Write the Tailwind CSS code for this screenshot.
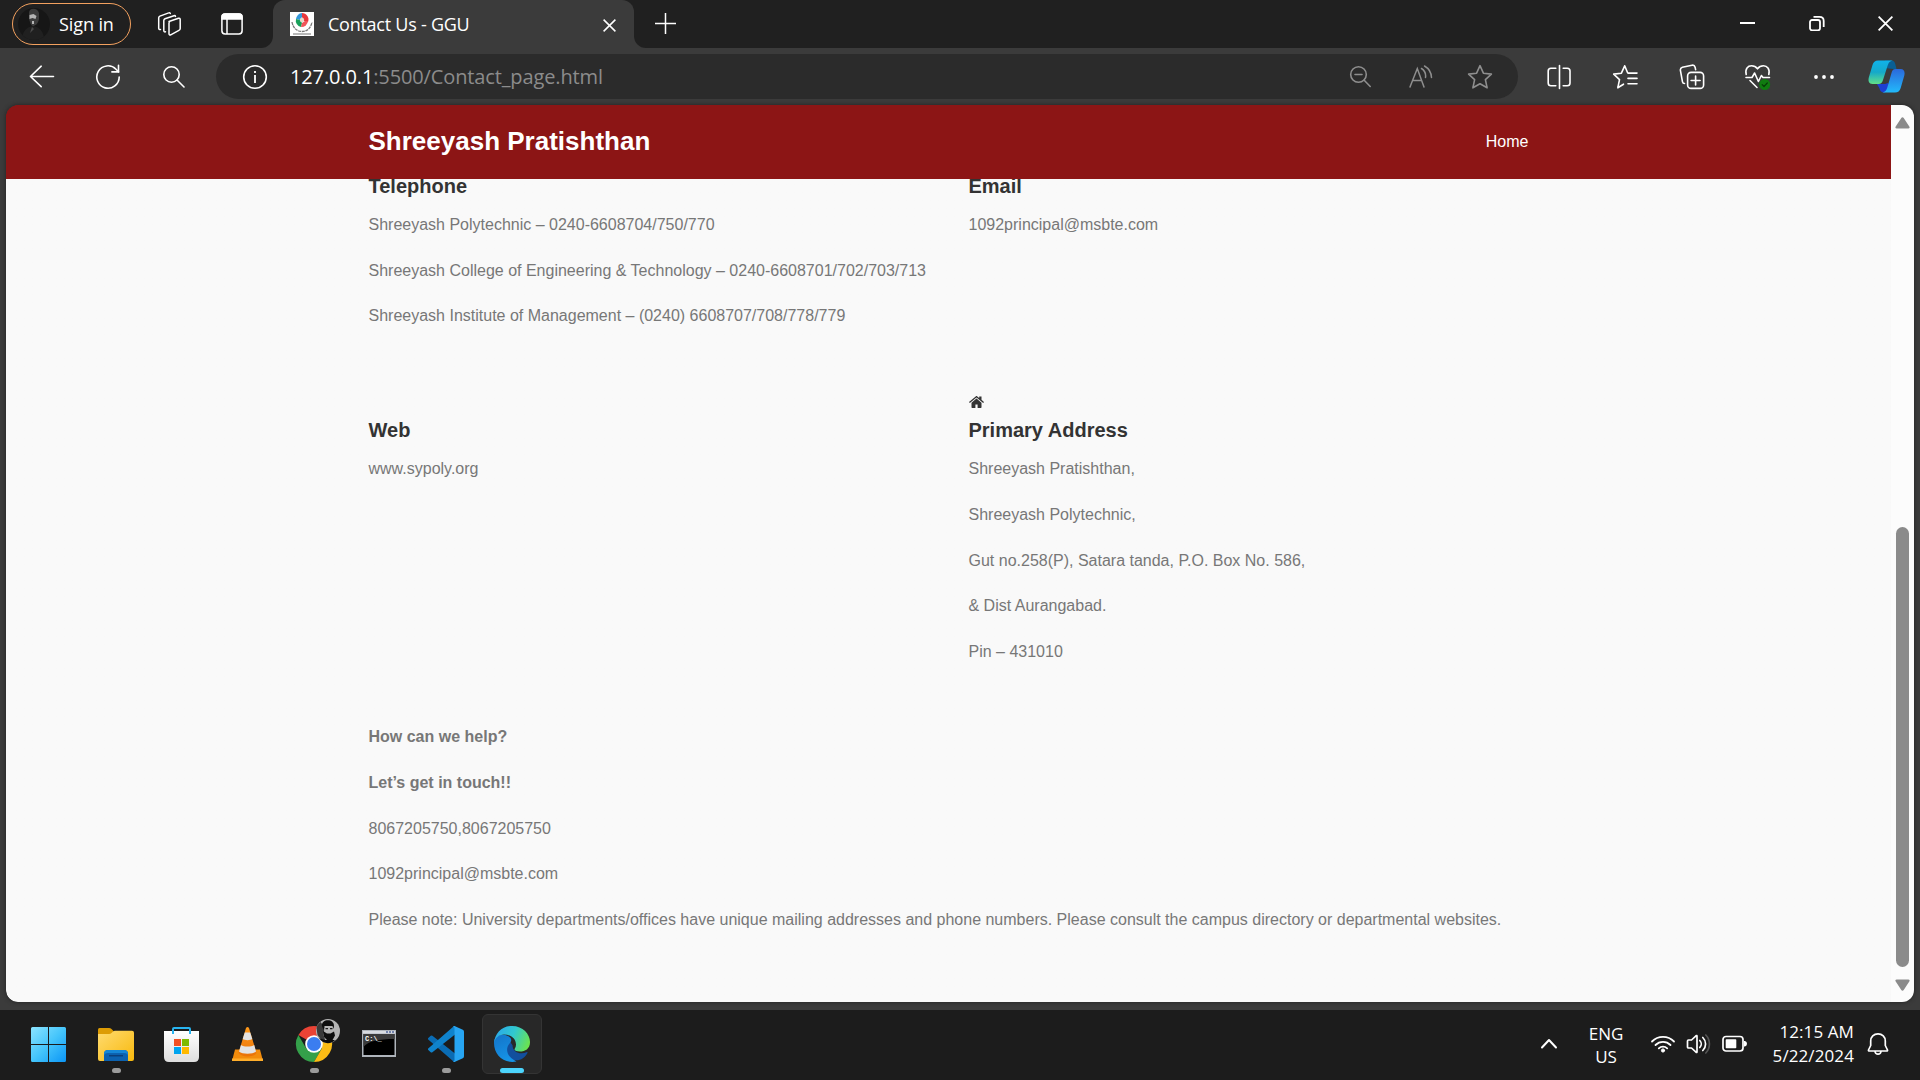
<!DOCTYPE html>
<html lang="en">
<head>
<meta charset="utf-8">
<title>Contact Us - GGU</title>
<script src="https://cdn.jsdelivr.net/npm/@tailwindcss/browser@4"></script>
</head>
<body class="w-[1920px] h-[1080px] overflow-hidden flex flex-col bg-[#3b3b3b] font-['Open_Sans','Noto_Sans',sans-serif] text-white">

<!-- Tab strip -->
<div class="h-12 shrink-0 flex items-start bg-[#3b3b3b]">
  <div class="w-[273px] h-12 shrink-0 flex items-start bg-[#202020] rounded-br-[12px]">
    <div class="ml-3 mt-[3px] w-[119px] h-[42px] rounded-full border-[1.5px] border-[#f3a15f] flex items-center pl-[5px] gap-[9px]">
      <svg class="size-8 shrink-0" viewBox="0 0 32 32"><defs><clipPath id="me"><circle cx="16" cy="16" r="16"/></clipPath></defs><g clip-path="url(#me)"><path fill="#161616" d="M0 0h32v32H0z"/><path fill="#202020" d="M4 32c0-9 5-13 11-14 6 1 11 5 11 14z"/><path fill="#3c3c3c" d="M11 5c0-6 9-5 10 0v6c-1 5-4 7-6 7s-3-4-4-7z"/><path fill="#b5b5b5" d="M11.500 7l4-1 3 2-1 3-3-1-3 1zM14 13h2v3h-2z"/><path fill="#4b4b4b" d="M14 19l-2 6 4-4z"/></g></svg>
      <span class="text-[18px] leading-6 tracking-[-0.1px] whitespace-nowrap mb-px">Sign in</span>
    </div>
    <svg class="ml-[25px] mt-[11px] w-[26px] h-[26px]" viewBox="0 0 26 26" fill="none" stroke="#fff" stroke-width="1.500" stroke-linejoin="round" stroke-linecap="round"><path d="M13 10.500l9.500-3.200c1-.3 1.700.2 1.700 1.200v9c0 .9-.5 1.600-1.300 1.900l-8.200 4.400c-.9.400-1.700 0-1.700-1V12c0-.8.1-1.200.8-1.500z"/><path d="M9.500 20.800c-1 .3-1.700-.2-1.700-1.200V9.500c0-.8.5-1.400 1.200-1.700l9-3.100c.7-.2 1.300 0 1.500.7"/><path d="M4.500 18.500c-1 .3-1.800-.2-1.800-1.200V6.800c0-.8.5-1.400 1.200-1.700l8.800-3.200c.7-.3 1.300 0 1.600.6"/></svg>
    <svg class="ml-[39px] mt-[13px] w-[22px] h-[22px]" viewBox="0 0 22 22" fill="none" stroke="#fff" stroke-width="1.500"><rect x=".9" y="1" width="20.200" height="20" rx="3.200"/><path fill="#fff" d="M1 6V4c0-2 1.200-3 3-3h14c1.800 0 3 1 3 3v2z"/><path d="M6 6v15"/></svg>
  </div>
  <div class="w-[361px] h-12 shrink-0 bg-[#202020]">
    <div class="h-full flex items-center rounded-t-[12px] bg-[#3b3b3b] pl-[17px]">
      <svg class="size-6" viewBox="0 0 24 24"><path fill="#fff" d="M0 0h24v24H0z"/><path fill="#3498db" d="M12 1a6.500 6.500 0 0 0-6 6l4 1 2-3z"/><path fill="#e8383d" d="M12 1a6.500 6.500 0 0 1 6 9l-4-1-2-4z"/><path fill="#18a05a" d="M6 7a6.500 6.500 0 0 0 5 8l1-4-2-3z"/><path fill="#f0565a" d="M18 9a6.500 6.500 0 0 1-7 6l1-4 3-2z"/><circle cx="12" cy="8" r="2.200" fill="#e9d9c9"/><path d="M2 10c1 6 5 9.500 10 9.500S21 16 22 10" fill="none" stroke="#777" stroke-width="1.300" stroke-dasharray="3 .7"/><path d="M3 22h18" stroke="#888" stroke-width="1.200"/></svg>
      <span class="ml-[14px] w-[275px] text-[18px] leading-6 tracking-[-0.25px] whitespace-nowrap mb-px">Contact Us - GGU</span>
      <svg class="mt-[2px] size-[13px]" viewBox="0 0 13 13" stroke="#fff" stroke-width="1.500"><path d="M.6.6l11.800 11.800M12.400.6L.6 12.400"/></svg>
    </div>
  </div>
  <div class="flex-1 h-12 flex items-start bg-[#202020] rounded-bl-[12px]">
    <svg class="ml-[21px] mt-[13px] size-[21px]" viewBox="0 0 21 21" stroke="#fff" stroke-width="1.500"><path d="M10.500 0v21M0 10.500h21"/></svg>
    <svg class="ml-auto mt-[15px] size-4" viewBox="0 0 16 16" stroke="#fff" stroke-width="2"><path d="M0 8h15"/></svg>
    <svg class="ml-[53px] mt-[15px] size-4" viewBox="0 0 16 16" fill="none" stroke="#fff" stroke-width="1.800"><rect x="1" y="5" width="10" height="10.300" rx="2"/><path d="M4.500 1.800h6c2.500 0 4.200 1.700 4.200 4.200v6"/></svg>
    <svg class="ml-[53px] mr-[27px] mt-[16px] size-[15px]" viewBox="0 0 15 15" stroke="#fff" stroke-width="1.800"><path d="M.6.6l13.800 13.800M14.400.6L.6 14.400"/></svg>
  </div>
</div>

<!-- Toolbar -->
<div class="h-[57px] shrink-0 flex items-center pl-[29px]">
  <svg class="size-[26px]" viewBox="0 0 26 26" fill="none" stroke="#fff" stroke-width="1.600" stroke-linecap="round" stroke-linejoin="round"><path d="M1.500 12.500h23M12.200 2.200L1.500 12.500l10.700 10.200"/></svg>
  <svg class="ml-10 size-[26px]" viewBox="0 0 26 26" fill="none" stroke="#fff" stroke-width="1.600" stroke-linecap="round"><path d="M24.200 13A11.200 11.200 0 1 1 21 5.200l2.500 2.600"/><path d="M23.500 1.300v6.600h-6.600"/></svg>
  <svg class="ml-[41px] size-[24px]" viewBox="0 0 24 24" fill="none" stroke="#fff" stroke-width="1.600" stroke-linecap="round"><circle cx="9.500" cy="9.500" r="7.700"/><path d="M15 15l7 7"/></svg>
  <div class="ml-[30px] w-[1302px] h-[45px] rounded-full bg-[#2b2b2b] flex items-center pl-[26px]">
    <svg class="size-[26px]" viewBox="0 0 26 26" fill="none" stroke="#fff" stroke-width="1.600"><circle cx="13" cy="13" r="11.300"/><path d="M13 11v8M13 7v2" stroke-width="1.800"/></svg>
    <span class="ml-[22px] text-[20px] leading-7 tracking-[-0.13px] whitespace-nowrap text-[#8c8c8c]"><span class="text-white">127.0.0.1</span>:5500/Contact_page.html</span>
    <svg class="ml-auto size-6" viewBox="0 0 24 24" fill="none" stroke="#8e8e8e" stroke-width="1.600" stroke-linecap="round"><circle cx="9.500" cy="9.500" r="7.800"/><path d="M15.200 15.200l6 6.300M6 9.500h7"/></svg>
    <svg class="ml-[36px] size-6" viewBox="0 0 24 24" fill="none" stroke="#8e8e8e" stroke-width="1.500" stroke-linecap="round"><path d="M1 22L8.300 3.500 15 22M3.500 15.500h9M12.500 3.500a9 9 0 0 1 4 9M15.500 1a14 14 0 0 1 7 11.500"/></svg>
    <svg class="ml-[34px] mr-[25px] size-[26px]" viewBox="0 0 26 26" fill="none" stroke="#8e8e8e" stroke-width="1.600" stroke-linejoin="round"><path d="M13 1.700l3.400 7.500 8 .9-6 5.500 1.700 8.200L13 19.800l-7.100 4 1.700-8.200-6-5.500 8-.9z"/></svg>
  </div>
  <svg class="ml-[28px] size-[26px]" viewBox="0 0 26 26" fill="none" stroke="#fff" stroke-width="1.600" stroke-linecap="round"><path d="M13.500 1.500v23M9.800 4.200H5a2.800 2.800 0 0 0-2.800 2.800v12A2.800 2.800 0 0 0 5 21.800h4.800M17.200 4.200h4a2.800 2.800 0 0 1 2.800 2.800v12a2.800 2.800 0 0 1-2.800 2.800h-4"/></svg>
  <svg class="ml-[40px] size-[26px]" viewBox="0 0 26 26" fill="none" stroke="#fff" stroke-width="1.600" stroke-linecap="round" stroke-linejoin="round"><path d="M16 9h-.3L12.700 1.800 9.400 9.200l-7.700.9 5.800 5.500-1.700 8.200 5.700-3.600M16 9.100h9M16 14.400h9M16 19.700h9"/></svg>
  <svg class="ml-[41px] size-[26px]" viewBox="0 0 26 26" fill="none" stroke="#fff" stroke-width="1.600" stroke-linecap="round" stroke-linejoin="round"><path d="M5.500 19.500c-1 0-1.800-.6-2-1.700L1.400 6.300c-.2-1.500.5-2.600 2-3L13 1.200c1.500-.3 2.700.5 3.100 2l.5 2.500"/><rect x="8.600" y="8.400" width="16" height="16" rx="3.500"/><path d="M16.600 12v9M12.100 16.500h9"/></svg>
  <svg class="ml-[39px] size-[27px]" viewBox="0 0 27 27" fill="none" stroke="#fff" stroke-width="1.600" stroke-linecap="round" stroke-linejoin="round"><path d="M2.200 11.500C.8 5.500 4 2.800 7.500 2.800c2.500 0 4.500 1 6 3 1.500-2 3.500-3 6-3 3.500 0 6.700 3.200 5.300 8.700M6 17.500l7 7"/><path d="M2 14.500h6l2.600-4.500 3.800 8.500 3-6 1.600 2h6.500"/><circle cx="20.700" cy="21.500" r="5.500" fill="#107c10" stroke="none"/><path d="M18.200 21.700l1.800 1.800 3.300-3.500" stroke="#073d07" stroke-width="1.200"/></svg>
  <svg class="ml-[40px] w-6 h-[26px]" viewBox="0 0 24 26" fill="#fff"><circle cx="5" cy="13" r="1.900"/><circle cx="13" cy="13" r="1.900"/><circle cx="21" cy="13" r="1.900"/></svg>
  <svg class="ml-[33px] w-[37px] h-[33px]" viewBox="0 0 37 33"><defs><linearGradient id="ca" x1="0" y1="0" x2="0" y2="1"><stop offset="0" stop-color="#0fb2ea"/><stop offset=".5" stop-color="#16a9c9"/><stop offset="1" stop-color="#62e088"/></linearGradient><linearGradient id="cb" x1="0" y1="0" x2="0" y2="1"><stop offset="0" stop-color="#2b68dc"/><stop offset="1" stop-color="#22bafb"/></linearGradient></defs><path fill="#0a5f94" d="M17 .5h6c2.500 0 3.500 1 4.200 3.200L28.500 9h-3c-3.500 0-5.500-1-8.500-1z"/><path fill="#1d3fd2" d="M9 24h8l3-1 1 5-4 4.500c-3.500 0-4.700-1.200-5.500-4z"/><path fill="url(#ca)" d="M10 .5H25c-3.500.5-4.500 2.500-5.500 5.500L15 20c-.8 2.700-2 4-4.500 4H4.500C.8 24 0 21 .8 17.500L4.500 5C5.500 2 7 .5 10 .5z"/><path fill="url(#cb)" d="M27.500 9h5c3.800 0 4.600 3 3.800 6.500L32.700 28c-1 3-2.700 4.500-5.700 4.500H14.500c3-.5 4-2.500 4.800-5L23.500 13c.8-2.700 1.500-4 4-4z"/></svg>
</div>

<!-- Page viewport -->
<div class="ml-1.5 w-[1908px] h-[897px] shrink-0 rounded-[12px] overflow-hidden flex shadow-[0_0_4px_#222] font-['Liberation_Sans',Arial,sans-serif]">
  <div class="w-[1885px] h-full overflow-hidden rounded-l-[12px] bg-linear-to-b from-[#8c1515] from-5% to-[#f9f9f9] to-5% text-[16px] leading-[25.6px] text-[#777]">
    <header class="relative z-10 h-[74px] bg-[#8c1515] text-white">
      <div class="mx-auto w-[1200px] h-full px-5 flex items-center justify-between">
        <h1 class="text-[26px] font-bold">Shreeyash Pratishthan</h1>
        <a>Home</a>
      </div>
    </header>
    <main class="mx-auto w-[1200px] px-5 mt-[-34.600px]">
      <div class="grid grid-cols-[600px_560px]">
        <section class="pb-10">
          <div class="h-[25.600px]"></div>
          <h2 class="text-[20px] leading-8 font-bold text-[#333] mb-2.5">Telephone</h2>
          <p class="mb-5">Shreeyash Polytechnic – 0240-6608704/750/770</p>
          <p class="mb-5">Shreeyash College of Engineering &amp; Technology – 0240-6608701/702/703/713</p>
          <p class="mb-5">Shreeyash Institute of Management – (0240) 6608707/708/778/779</p>
        </section>
        <section class="pb-10">
          <div class="h-[25.600px]"></div>
          <h2 class="text-[20px] leading-8 font-bold text-[#333] mb-2.5">Email</h2>
          <p>1092principal@msbte.com</p>
        </section>
        <section class="pb-10">
          <div class="h-[25.600px]"></div>
          <h2 class="text-[20px] leading-8 font-bold text-[#333] mb-2.5">Web</h2>
          <p>www.sypoly.org</p>
        </section>
        <section class="pb-10">
          <div class="h-[25.600px] flex items-center">
            <svg class="w-[15px] h-3" viewBox="0 0 15 12" fill="#333"><path d="M7.500 2.500l5 4.200v4.500c0 .4-.3.700-.6.700H8.600V8.500H6.400v3.400H3.100c-.3 0-.6-.3-.6-.7V6.700z"/><path d="M0 6L6.700.4c.5-.4 1.100-.4 1.600 0l1.900 1.600V.4h2.300v3.400L15 6l-.8 1-6.700-5.400L.8 7z"/></svg>
          </div>
          <h2 class="text-[20px] leading-8 font-bold text-[#333] mb-2.5">Primary Address</h2>
          <p class="mb-5">Shreeyash Pratishthan,</p>
          <p class="mb-5">Shreeyash Polytechnic,</p>
          <p class="mb-5">Gut no.258(P), Satara tanda, P.O. Box No. 586,</p>
          <p class="mb-5">&amp; Dist Aurangabad.</p>
          <p class="mb-5">Pin – 431010</p>
        </section>
      </div>
      <section>
        <p class="mb-5 font-bold">How can we help?</p>
        <p class="mb-5 font-bold">Let’s get in touch!!</p>
        <p class="mb-5">8067205750,8067205750</p>
        <p class="mb-5">1092principal@msbte.com</p>
        <p class="whitespace-nowrap">Please note: University departments/offices have unique mailing addresses and phone numbers. Please consult the campus directory or departmental websites.</p>
      </section>
    </main>
  </div>
  <div class="w-[23px] h-full flex flex-col items-center pt-3 pb-[11px] bg-[#fcfcfc]">
    <svg class="w-[15px] h-3" viewBox="0 0 15 12"><path fill="#8b8b8b" d="M6.300 1c.6-1 1.800-1 2.400 0l5.600 8.500c.7 1.200.2 2-1 2H1.700c-1.200 0-1.700-.8-1-2z"/></svg>
    <div class="mt-auto w-[13px] h-[440px] rounded-full bg-[#8b8b8b]"></div>
    <svg class="mt-3 w-[15px] h-3" viewBox="0 0 15 12"><path fill="#8b8b8b" d="M6.300 11c.6 1 1.800 1 2.400 0l5.600-8.500c.7-1.200.2-2-1-2H1.700c-1.200 0-1.700.8-1 2z"/></svg>
  </div>
</div>

<!-- Taskbar -->
<div class="mt-2 h-[70px] shrink-0 bg-[#1c1c1c] flex items-start">
  <div class="ml-[18px] flex pt-1">
    <div class="w-[60px] h-[60px] pt-[13px] flex justify-center">
      <svg class="size-[35px]" viewBox="0 0 35 35"><defs><linearGradient id="w" x1="0" y1="0" x2="1" y2="1"><stop offset="0" stop-color="#8ce4ff"/><stop offset=".5" stop-color="#45c5fb"/><stop offset="1" stop-color="#0b95f5"/></linearGradient></defs><path fill="url(#w)" d="M1.500 0H17v17H0V1.500Q0 0 1.500 0zM18 0h15.500Q35 0 35 1.500V17H18zM0 18h17v17H1.500Q0 35 0 33.500zM18 18h17v15.500q0 1.500-1.500 1.500H18z"/></svg>
    </div>
    <div class="ml-2 w-[60px] h-[60px] pt-[13px] flex flex-col items-center">
      <svg class="w-9 h-[35px] shrink-0" viewBox="0 0 36 35"><defs><linearGradient id="f" x1="0" y1="0" x2="1" y2="1"><stop offset="0" stop-color="#ffdb70"/><stop offset="1" stop-color="#f8b90d"/></linearGradient></defs><path fill="#dd9c05" d="M0 7V2.500Q0 1 1.500 1H11q1.500 0 2.500 1l2 2v4z"/><path fill="url(#f)" d="M0 7h11q1.500 0 2.500-1l1.500-1.500q.7-.7 2-.7h17q2 0 2 2V32q0 2-2 2H2q-2 0-2-2z"/><path fill="#0c62b0" d="M6 34V27q0-4 4-4h16q4 0 4 4v7z"/><path fill="#1587d6" d="M6 29v-2q0-4 4-4h16q4 0 4 4v2q0-3-4-3H10q-4 0-4 3z"/><path stroke="#0b3f7a" stroke-width="1.500" d="M11 28.700h14"/></svg>
      <div class="mt-1.5 w-[9px] h-[5px] shrink-0 rounded-full bg-[#9b9b9b]"></div>
    </div>
    <div class="ml-[5px] w-[60px] h-[60px] pt-[13px] flex justify-center">
      <svg class="size-[35px]" viewBox="0 0 35 35"><defs><linearGradient id="s" x1="0" y1="0" x2="0" y2="1"><stop offset="0" stop-color="#fff"/><stop offset="1" stop-color="#dedede"/></linearGradient></defs><path fill="url(#s)" d="M0 4h35v26q0 5-5 5H5q-5 0-5-5z"/><path fill="none" stroke="#28b4f0" stroke-width="2" d="M9 7V2q0-1 1-1h15q1 0 1 1v5"/><path fill="#f25022" d="M10 12h7v7h-7z"/><path fill="#7fba00" d="M18 12h7v7h-7z"/><path fill="#00a4ef" d="M10 20h7v7h-7z"/><path fill="#ffb900" d="M18 20h7v7h-7z"/></svg>
    </div>
    <div class="ml-1.5 w-[60px] h-[60px] pt-[13px] flex justify-center">
      <svg class="w-[31px] h-[35px]" viewBox="0 0 31 35"><defs><linearGradient id="v" x1="0" y1="0" x2="0" y2="1"><stop offset="0" stop-color="#ff9a1a"/><stop offset="1" stop-color="#e97208"/></linearGradient></defs><path fill="#f28c0c" d="M3 22.500h25L31 34H0z"/><path fill="#ffae2b" d="M0 31.500h31V34H0z"/><path fill="url(#v)" d="M14 1q1.500-2 3 0l7.500 25c-3 4.500-15 4.500-18 0z"/><path fill="#e3e3e3" d="M12.800 5.500h5.400L20.300 12c-2 1.500-7.500 1.500-9.600 0zM9 18c3 2 10 2 13.200 0l1.800 6.500c-3.500 3-13.500 3-17 0z"/></svg>
    </div>
    <div class="ml-[7px] w-[60px] h-[60px] pt-[3px] flex flex-col items-center">
      <svg class="w-[54px] h-[45px] shrink-0" viewBox="0 0 54 45"><g transform="translate(27,27)"><path fill="#ea4335" d="M0 0L-15.600-9A18 18 0 0 1 15.600-9H0z"/><path fill="#34a04a" d="M-15.600-9A18 18 0 0 0 0 18L7.800 4.500 0 0-7.800 4.500z"/><path fill="#fbbc15" d="M15.600-9A18 18 0 0 1 0 18L7.800 4.500 7-9z"/><path fill="#ea4335" d="M0 0V-9h8z"/><circle r="8.800" fill="#fff"/><circle r="7" fill="#3b7df0"/></g><circle cx="41" cy="14" r="12" fill="#b5b5b5"/><path fill="#3a3a3a" d="M29.500 11q1-4 4-6l4 5-1 8 2 6q-5-1-8-6z"/><path fill="#0e0e0e" d="M35 9c-1-7 12-8 12 0l-.5 3-1-3h-8l-1 4zM36 14l4 2.500h3.500l3.500-2 1 4-3 5.500h-4l-4-4zM32 21l6 2 10 0c-3 4-12 5-16-2z"/><path fill="#1a1a1a" d="M38.500 11h2.500v1.200h-2.500zM43 11h2.500v1.200H43z"/></svg>
      <div class="mt-[6px] w-[9px] h-[5px] shrink-0 rounded-full bg-[#9b9b9b]"></div>
    </div>
    <div class="ml-[5px] w-[60px] h-[60px] pt-4 flex justify-center">
      <svg class="w-[34px] h-[27px]" viewBox="0 0 34 27"><path fill="#aeb4bb" d="M0 0h34v27H0z"/><path fill="#d8dbe0" d="M1 1h32v2.500H1z"/><path fill="#51679c" d="M24 1.200h2v1.500h-2zM27 1.200h2v1.500h-2zM30 1.200h2v1.500h-2z"/><path fill="#000" d="M1.500 4h31v21h-31z"/><path fill="#3a3a3a" d="M1.500 4h31v5C17 9 6 11 1.500 17z"/><text x="3" y="11" font-family="Liberation Mono, monospace" font-weight="bold" font-size="7" fill="#fff">C:\_</text></svg>
    </div>
    <div class="ml-[7px] w-[60px] h-[60px] pt-3 flex flex-col items-center">
      <svg class="size-9 shrink-0" viewBox="0 0 36 36"><path fill="#0a6cb4" d="M0 12.200l2.700-2.400q.8-.6 1.700 0L27 27.500V36q-1 0-1.800-.8L.2 13.500q-.7-.7-.2-1.300z"/><path fill="#0f83cd" d="M0 23.800l2.700 2.400q.8.600 1.700 0L27 8.500V0q-1 0-1.800.8L.2 22.500q-.7.700-.2 1.300z"/><path fill="#27a5f2" d="M26.500 0l8.300 3.800q1.200.6 1.200 2v24.400q0 1.400-1.200 2L26.500 36q-1 .2-1.500-.8 1.500.5 1.500-1.500V2.300q0-2-1.500-1.500.5-1 1.500-.8z"/></svg>
      <div class="mt-1.5 w-[9px] h-[5px] shrink-0 rounded-full bg-[#9b9b9b]"></div>
    </div>
    <div class="ml-1.5 w-[60px] h-[60px] pt-[11px] flex flex-col items-center rounded-[6px] bg-[#282828] border border-[#343434]">
      <svg class="size-9 shrink-0" viewBox="0 0 36 36"><defs><linearGradient id="e1" x1="0" y1=".3" x2="1" y2=".6"><stop offset="0" stop-color="#2aa8ea"/><stop offset=".5" stop-color="#31c8cf"/><stop offset="1" stop-color="#6be34f"/></linearGradient><linearGradient id="e2" x1="0" y1="0" x2=".4" y2="1"><stop offset="0" stop-color="#1473c8"/><stop offset="1" stop-color="#1593e6"/></linearGradient></defs><path fill="#124f9d" d="M15 14c-7 4-7 18 4 20 7 1.500 11.500-2 14.500-7 .3-.7-.3-1.200-1-.8-6 3-14 0-14-7z"/><path fill="url(#e2)" d="M0 17C0 9 8 7 14 10c4 2 4 5 1.500 7.500-5 6-2 14 7 18C10 38 0 29 0 17z"/><path fill="url(#e1)" d="M0 17C1 7 8 0 18 0c11 0 18 8 18 16 0 7-5 9.500-10 9.500-3 0-5.500-1-5.500-2 0-1 1.500-2 1.500-5C22 12 16 8.500 10 8.500 5 8.500 1 12 0 17z"/></svg>
      <div class="mt-1.5 w-6 h-[5px] shrink-0 rounded-full bg-[#4cd4fc]"></div>
    </div>
  </div>
  <div class="ml-auto flex h-[70px]">
    <svg class="mt-[27px] w-[18px] h-[13px]" viewBox="0 0 18 13" fill="none" stroke="#fff" stroke-width="2" stroke-linecap="round" stroke-linejoin="round"><path d="M2 10.500l7-7.500 7 7.500"/></svg>
    <div class="ml-[21px] w-[54px] pt-[12px] text-center text-[17px] leading-[23px]">ENG<br>US</div>
    <svg class="ml-[17px] mt-[22px] w-[26px] h-[22px]" viewBox="0 0 26 22" fill="none" stroke="#fff" stroke-width="1.800" stroke-linecap="round"><path d="M2 9.500a15.500 15.500 0 0 1 22 0M5.500 13a10.500 10.500 0 0 1 15 0M8.800 16.300a6 6 0 0 1 8.400 0"/><circle cx="13" cy="18.500" r="1.600" fill="#fff" stroke-width="1"/></svg>
    <svg class="ml-[10px] mt-[23px] w-[25px] h-[22px]" viewBox="0 0 25 22" fill="none" stroke="#fff" stroke-width="1.700" stroke-linecap="round" stroke-linejoin="round"><path d="M1.500 8q0-1 1-1h3l4.500-4.200q1-.7 1 .5v15.400q0 1.200-1 .5L5.500 15h-3q-1 0-1-1z"/><path d="M13.800 7.500a5 5 0 0 1 0 7M16.800 4.500a9 9 0 0 1 0 13"/><path stroke="#555" d="M19.800 2a13 13 0 0 1 0 18"/></svg>
    <svg class="ml-[11px] mt-[25px] w-[25px] h-[18px]" viewBox="0 0 25 18" fill="none" stroke="#fff" stroke-width="1.700"><rect x="1" y="1.500" width="20" height="14.500" rx="3"/><path fill="#fff" stroke="none" d="M4.500 4.300h9q.8 0 .8.800v7.300q0 .8-.8.800h-9q-.8 0-.8-.8V5.100q0-.8.8-.8zM22 6h1q2 .5 2 2.800T23 11.500h-1z"/></svg>
    <div class="ml-[16px] w-[91px] pt-[10px] text-right text-[17px] leading-6 tracking-[0.1px] whitespace-nowrap">12:15 AM<br>5/22/2024</div>
    <svg class="ml-[13px] mr-[31px] mt-[22px] w-[22px] h-[24px]" viewBox="0 0 22 24" fill="none" stroke="#fff" stroke-width="1.700" stroke-linecap="round" stroke-linejoin="round"><path d="M11 1.800c-4.300 0-7.300 3.200-7.300 7.200v4.500L1.500 18q-.3 1 .8 1h17.400q1.100 0 .8-1l-2.200-4.500V9c0-4-3-7.200-7.300-7.200zM8 19.500c.5 3.500 5.500 3.500 6 0"/></svg>
  </div>
</div>
</body>
</html>
